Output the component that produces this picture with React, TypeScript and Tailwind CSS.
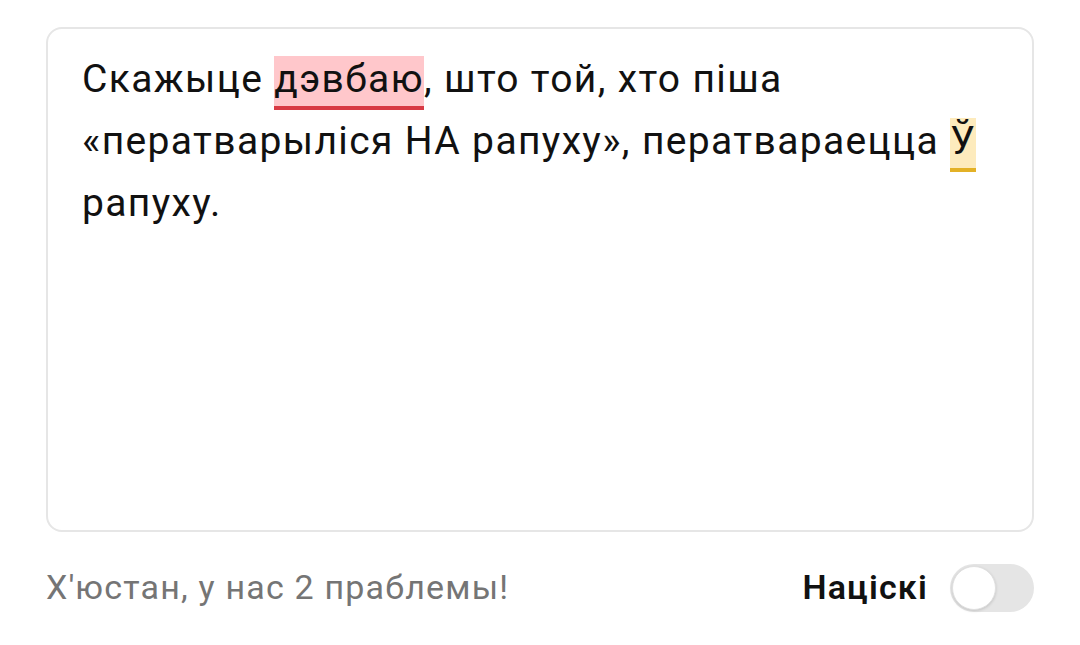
import React, { useState } from 'react';

const font = { fontFamily: 'Roboto, "Noto Sans", sans-serif' };

export default function App() {
  const [on, setOn] = useState(false);

  return (
    <div className="w-[1080px] h-[645px] bg-white px-[46px] pt-[27px]" style={font}>
      {/* editor */}
      <div className="h-[505px] rounded-[16px] border-2 border-[#e6e6e6] pl-[34px] pr-[34px] pt-[19px]">
        <p className="text-[39px] leading-[62px] tracking-[0.035em] text-[#111]">
          Скажыце{' '}
          <span className="bg-[#ffc7cb] pb-[4px] border-b-4 border-[#d83a44]">дэвбаю</span>, што той, хто піша
          «ператварыліся НА рапуху», ператвараецца{' '}
          <span className="bg-[#fdebbd] pb-[4px] border-b-4 border-[#e3b126]">Ў</span> рапуху.
        </p>
      </div>

      {/* footer */}
      <div className="mt-[30px] flex items-center justify-between">
        <span className="text-[34px] tracking-[0.035em] text-[#757575]">Х'юстан, у нас 2 праблемы!</span>
        <div className="flex items-center gap-[22px]">
          <span className="text-[34px] tracking-[0.035em] font-semibold text-[#111]">Націскі</span>
          <button
            onClick={() => setOn(!on)}
            className={
              'relative w-[84px] h-[48px] rounded-full flex items-center px-[2px] ' +
              (on ? 'bg-[#4caf50] justify-end' : 'bg-[#e5e5e5] justify-start')
            }
          >
            <span className="block w-[44px] h-[44px] rounded-full bg-white border border-[#e0e0e0] shadow-[0_1px_3px_rgba(0,0,0,0.15)]" />
          </button>
        </div>
      </div>
    </div>
  );
}
